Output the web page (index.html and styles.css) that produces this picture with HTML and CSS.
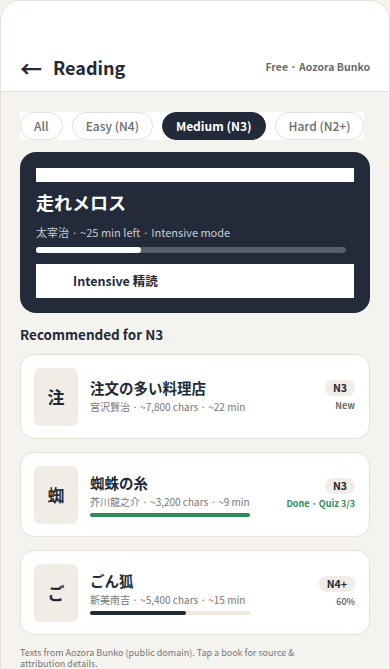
FILE: index.html
```html
<!DOCTYPE html>
<html lang="ja">
<head>
    <meta charset="UTF-8">
    <meta name="viewport" content="width=device-width, initial-scale=1.0">
    <title>Reading</title>
    <link rel="stylesheet" href="styles.css">
</head>
<body>
    <div class="app">
        <header class="header">
            <div class="header-left">
                <span class="back">&larr;</span>
                <h1>Reading</h1>
            </div>
            <div class="header-right">Free · Aozora Bunko</div>
        </header>

        <main class="content">
            <div class="chips">
                <div class="chip">All</div>
                <div class="chip">Easy (N4)</div>
                <div class="chip active">Medium (N3)</div>
                <div class="chip">Hard (N2+)</div>
            </div>

            <div class="current">
                <div class="current-label"></div>
                <div class="current-title">走れメロス</div>
                <div class="current-meta">太宰治 · ~25 min left · Intensive mode</div>
                <div class="current-track"><div class="current-fill" style="width: 34%"></div></div>
                <div class="current-btn">Intensive 精読</div>
            </div>

            <h2>Recommended for N3</h2>

            <div class="book">
                <div class="thumb">注</div>
                <div class="book-info">
                    <div class="book-title">注文の多い料理店</div>
                    <div class="book-meta">宮沢賢治 · ~7,800 chars · ~22 min</div>
                </div>
                <div class="book-side">
                    <div class="badge">N3</div>
                    <div class="status">New</div>
                </div>
            </div>

            <div class="book">
                <div class="thumb">蜘</div>
                <div class="book-info">
                    <div class="book-title">蜘蛛の糸</div>
                    <div class="book-meta">芥川龍之介 · ~3,200 chars · ~9 min</div>
                    <div class="bar"><div class="bar-fill done" style="width: 100%"></div></div>
                </div>
                <div class="book-side">
                    <div class="badge">N3</div>
                    <div class="status green">Done · Quiz 3/3</div>
                </div>
            </div>

            <div class="book last">
                <div class="thumb">ご</div>
                <div class="book-info">
                    <div class="book-title">ごん狐</div>
                    <div class="book-meta">新美南吉 · ~5,400 chars · ~15 min</div>
                    <div class="bar"><div class="bar-fill" style="width: 60%"></div></div>
                </div>
                <div class="book-side">
                    <div class="badge">N4+</div>
                    <div class="status plain">60%</div>
                </div>
            </div>

            <p class="note">Texts from Aozora Bunko (public domain). Tap a book for source &amp; attribution details.</p>
        </main>
    </div>
</body>
</html>
```

FILE: styles.css
```css
* {
    box-sizing: border-box;
    margin: 0;
    padding: 0;
    font-family: "Noto Sans CJK JP", "Noto Sans", sans-serif;
}
body {
    background-color: #f5f3ef;
    color: #222a38;
    width: 390px;
    height: 669px;
    overflow: hidden;
}
.app {
    background-color: #f5f3ef;
    border: 1px solid #e6e0d6;
    border-bottom: none;
    border-radius: 20px 20px 0 0;
    overflow: hidden;
    height: 669px;
}
.header {
    background-color: white;
    height: 91px;
    border-bottom: 1px solid #e6e0d6;
    display: flex;
    align-items: flex-end;
    justify-content: space-between;
    padding: 0 19px 11px 19px;
}
.header-left {
    display: flex;
    align-items: center;
    gap: 11px;
}
.back {
    font-size: 22px;
    font-weight: 700;
    line-height: 26px;
    color: #222a38;
}
h1 {
    font-size: 18px;
    font-weight: 700;
    line-height: 26px;
    color: #222a38;
}
.header-right {
    font-size: 10.5px;
    font-weight: 700;
    color: #6b6b6b;
    line-height: 26px;
}
.content {
    padding: 20px 19px 0 19px;
}
.chips {
    display: flex;
    gap: 9px;
    background-color: white;
    width: fit-content;
}
.chip {
    flex-shrink: 0;
    white-space: nowrap;
    height: 28px;
    line-height: 26px;
    padding: 0 13px;
    border: 1px solid #e6e0d6;
    border-radius: 14px;
    font-size: 12px;
    font-weight: 500;
    color: #6b6b6b;
    background-color: white;
}
.chip.active {
    background-color: #222a3a;
    border-color: #222a3a;
    color: white;
    font-weight: 700;
}
.current {
    margin-top: 12px;
    background-color: #232a3a;
    border-radius: 16px;
    padding: 16px 16px 15px 16px;
    height: 161px;
}
.current-label {
    background-color: white;
    height: 14px;
}
.current-title {
    color: white;
    font-size: 18px;
    font-weight: 700;
    line-height: 26px;
    margin-top: 7px;
}
.current-meta {
    color: #c8ccd3;
    font-size: 11px;
    line-height: 18px;
    margin-top: 8px;
}
.current-track {
    background-color: #575d69;
    height: 6px;
    border-radius: 3px;
    margin-top: 6px;
    width: 310px;
}
.current-fill {
    background-color: white;
    height: 6px;
    border-radius: 3px;
}
.current-btn {
    background-color: white;
    height: 34px;
    margin-top: 11px;
    padding-left: 37px;
    line-height: 34px;
    font-size: 12.5px;
    font-weight: 700;
    color: #222a38;
}
h2 {
    font-size: 13.5px;
    font-weight: 700;
    line-height: 20px;
    margin-top: 11px;
    margin-bottom: 10px;
    color: #222a38;
}
.book {
    background-color: white;
    border: 1px solid #e8e2d9;
    border-radius: 14px;
    height: 85px;
    display: flex;
    align-items: center;
    padding: 0 14px 0 13px;
    margin-bottom: 13px;
}
.book.last {
    margin-bottom: 12px;
}
.thumb {
    width: 44px;
    height: 58px;
    border-radius: 6px;
    background-color: #f1ede6;
    display: flex;
    align-items: center;
    justify-content: center;
    font-size: 17px;
    font-weight: 700;
    color: #222a38;
    flex-shrink: 0;
}
.book-info {
    flex: 1;
    padding-left: 12px;
}
.book-title {
    font-size: 14.5px;
    font-weight: 700;
    line-height: 20px;
    color: #222a38;
}
.book-meta {
    font-size: 10px;
    color: #777;
    line-height: 16px;
    margin-top: 1px;
}
.bar {
    width: 160px;
    height: 4px;
    border-radius: 2px;
    background-color: #efe9df;
    margin-top: 3px;
}
.bar-fill {
    height: 4px;
    border-radius: 2px;
    background-color: #222a38;
}
.bar-fill.done {
    background-color: #2e8a5a;
}
.book-side {
    display: flex;
    flex-direction: column;
    align-items: flex-end;
    gap: 3px;
}
.badge {
    background-color: #f1ede6;
    border-radius: 9px;
    height: 16px;
    line-height: 16px;
    padding: 0 8px;
    font-size: 10.5px;
    font-weight: 700;
    color: #222a38;
}
.status {
    font-size: 9px;
    font-weight: 700;
    color: #6b6b6b;
    line-height: 14px;
}
.status.green {
    color: #2e8a5a;
}
.status.plain {
    font-weight: 500;
    color: #555;
}
.note {
    font-size: 9px;
    color: #777;
    line-height: 11px;
    max-width: 285px;
}
```
